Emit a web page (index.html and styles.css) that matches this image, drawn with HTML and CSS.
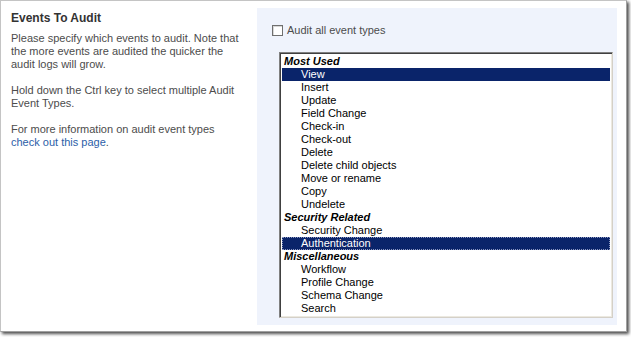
FILE: index.html
```html
<!DOCTYPE html>
<html>
<head>
<meta charset="utf-8">
<link rel="stylesheet" href="styles.css">
</head>
<body>
<div class="frame">
  <div class="info">
    <h3 class="title">Events To Audit</h3>
    <p>Please specify which events to audit. Note that the more events are audited the quicker the audit logs will grow.</p>
    <p>Hold down the Ctrl key to select multiple Audit Event Types.</p>
    <p>For more information on audit event types <a href="#" class="link">check out this page</a>.</p>
  </div>
  <div class="panel">
    <label class="check"><span class="box"></span>Audit all event types</label>
    <div class="listbox">
      <div class="grp">Most Used</div>
      <div class="opt sel">View</div>
      <div class="opt">Insert</div>
      <div class="opt">Update</div>
      <div class="opt">Field Change</div>
      <div class="opt">Check-in</div>
      <div class="opt">Check-out</div>
      <div class="opt">Delete</div>
      <div class="opt">Delete child objects</div>
      <div class="opt">Move or rename</div>
      <div class="opt">Copy</div>
      <div class="opt">Undelete</div>
      <div class="grp">Security Related</div>
      <div class="opt">Security Change</div>
      <div class="opt sel focus">Authentication</div>
      <div class="grp">Miscellaneous</div>
      <div class="opt">Workflow</div>
      <div class="opt">Profile Change</div>
      <div class="opt">Schema Change</div>
      <div class="opt">Search</div>
    </div>
  </div>
</div>
</body>
</html>
```

FILE: styles.css
```css
html, body {
  margin: 0;
  padding: 0;
  background: #fff;
}
body {
  width: 631px;
  height: 337px;
  overflow: hidden;
  font-family: "Liberation Sans", Arial, sans-serif;
}
.frame {
  box-sizing: border-box;
  width: 627px;
  height: 332px;
  border-left: 1px solid #c4c4c4;
  border-top: 1px solid #c4c4c4;
  border-right: 1px solid #a0a0a0;
  border-bottom: 1px solid #a0a0a0;
  box-shadow: 2px 2px 3px rgba(0,0,0,0.7);
  background: #fff;
  display: grid;
  grid-template-columns: 256px 360px;
  align-items: start;
}
.info {
  width: 234px;
  padding: 10px 0 0 10px;
  color: #4c4c4c;
  font-size: 11px;
  line-height: 13px;
}
.title {
  margin: 0 0 7px 0;
  font-size: 12px;
  line-height: 14px;
  font-weight: bold;
  color: #333;
}
.info p {
  margin: 0 0 13px 0;
}
.link {
  color: #2c5ea8;
  text-decoration: none;
}
.panel {
  margin-top: 7px;
  height: 317px;
  box-sizing: border-box;
  background: #eff3fc;
  padding: 16px 0 0 15px;
}
.check {
  display: flex;
  align-items: center;
  font-size: 11px;
  color: #4c4c4c;
  height: 12px;
}
.box {
  width: 9px;
  height: 9px;
  border: 1px solid #6f6f6f;
  background: #fff;
  box-shadow: inset 1px 1px 0 #d8d8d8;
  margin-right: 4px;
}
.listbox {
  margin: 16px 0 0 7px;
  width: 334px;
  height: 266px;
  box-sizing: border-box;
  background: #fff;
  border-top: 1px solid #808080;
  border-left: 1px solid #808080;
  border-right: 1px solid #d4d0c8;
  border-bottom: 1px solid #d4d0c8;
  box-shadow: inset 1px 1px 0 #404040, inset -1px -1px 0 #ece9e0;
  padding: 2px 2px 0 2px;
  font-size: 11px;
  color: #000;
  overflow: hidden;
}
.grp, .opt {
  height: 13px;
  line-height: 13px;
  white-space: nowrap;
}
.grp {
  font-weight: bold;
  font-style: italic;
  padding-left: 2px;
}
.opt {
  padding-left: 19px;
}
.sel {
  background: #0a246a;
  color: #fff;
}
.focus {
  outline: 1px dotted #8a96c0;
  outline-offset: -1px;
}
```
